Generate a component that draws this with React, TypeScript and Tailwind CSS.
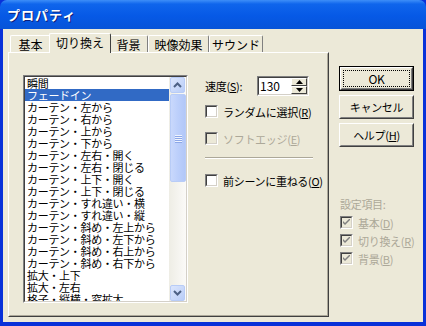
import type { ReactNode } from "react";

const items = [
  "瞬間",
  "フェードイン",
  "カーテン・左から",
  "カーテン・右から",
  "カーテン・上から",
  "カーテン・下から",
  "カーテン・左右・開く",
  "カーテン・左右・閉じる",
  "カーテン・上下・開く",
  "カーテン・上下・閉じる",
  "カーテン・すれ違い・横",
  "カーテン・すれ違い・縦",
  "カーテン・斜め・左上から",
  "カーテン・斜め・左下から",
  "カーテン・斜め・右上から",
  "カーテン・斜め・右下から",
  "拡大・上下",
  "拡大・左右",
  "格子・縦横・窓拡大"
];

const tabs = ["基本", "切り換え", "背景", "映像効果", "サウンド"];

export default function App() {
  return (
    <div className="flex h-[326px] w-[426px] flex-col bg-[#0831d9] font-['Noto_Sans_CJK_JP','Noto_Sans',sans-serif] text-[11px] leading-[12px] tracking-[-0.3px] text-black">
      {/* title bar */}
      <div className="flex h-[29px] shrink-0 items-center rounded-t-[7px] bg-[linear-gradient(to_bottom,#3d8ef8_0%,#0f65ec_14%,#0659e6_55%,#0754d8_100%)] pl-[7px]">
        <span className="text-[13px] font-bold tracking-[1px] text-white [text-shadow:1px_1px_0_#0a1e7a]">
          プロパティ
        </span>
      </div>

      {/* client */}
      <div className="mx-[3px] mb-[4px] flex flex-1 bg-[#ece9d8]">
        <div className="ml-[5px] mt-[4px] flex w-[321px] flex-col">
          {/* tabs */}
          <div className="flex h-[19px] items-end pl-[2px] text-[12px] tracking-normal">
            {tabs.map((tab, i) => (
              <Tab key={tab} label={tab} selected={i === 1} width={[41, 58, 39, 61, 54][i]} />
            ))}
          </div>

          {/* panel */}
          <div className="flex h-[265px] border border-b-[#404040] border-l-white border-r-[#404040] border-t-white">
            <div className="flex flex-1 border border-b-[#aca899] border-l-[#ece9d8] border-r-[#aca899] border-t-[#ece9d8] pl-[13px] pt-[21px]">
              <ListBox />

              <div className="ml-[17px] flex w-[108px] flex-col pt-[1px]">
                <div className="flex items-center">
                  <span className="w-[52px]">
                    速度(<u>S</u>):
                  </span>
                  <Spin value="130" />
                </div>
                <div className="mt-[9px]">
                  <Check label={<>ランダムに選択(<u>R</u>)</>} />
                </div>
                <div className="mt-[14px]">
                  <Check label={<>ソフトエッジ(<u>E</u>)</>} disabled />
                </div>
                <div className="mt-[12px] h-[2px] border-b border-t border-b-white border-t-[#aca899]" />
                <div className="mt-[15px]">
                  <Check label={<>前シーンに重ねる(<u>O</u>)</>} />
                </div>
              </div>
            </div>
          </div>
        </div>

        {/* right column */}
        <div className="ml-[10px] mt-[37px] flex w-[75px] flex-col">
          <Button primary>OK</Button>
          <div className="mt-[4px]">
            <Button>キャンセル</Button>
          </div>
          <div className="mt-[4px]">
            <Button>
              ヘルプ(<u>H</u>)
            </Button>
          </div>
          <div className="ml-[1px] mt-[51px] text-[#aca899]">設定項目:</div>
          <div className="ml-[1px] mt-[6px] flex flex-col gap-[5px]">
            <Check label={<>基本(<u>D</u>)</>} disabled checked />
            <Check label={<>切り換え(<u>R</u>)</>} disabled checked />
            <Check label={<>背景(<u>B</u>)</>} disabled checked />
          </div>
        </div>
      </div>
    </div>
  );
}

function Tab({ label, selected, width }: { label: string; selected?: boolean; width: number }) {
  if (selected) {
    return (
      <div
        className="relative z-10 -mb-[1px] -ml-[2px] -mr-[2px] flex h-[20px] items-center justify-center rounded-t-[2px] border border-b-0 border-l-white border-r-[#404040] border-t-white bg-[#ece9d8] pb-[1px]"
        style={{ width: width + 4 }}
      >
        {label}
      </div>
    );
  }
  return (
    <div
      className="flex h-[17px] items-center justify-center rounded-t-[2px] border border-b-0 border-l-white border-r-[#808080] border-t-white bg-[#ece9d8] pt-[1px]"
      style={{ width }}
    >
      {label}
    </div>
  );
}

function ListBox() {
  return (
    <div className="h-[228px] w-[165px] border border-b-white border-l-[#808080] border-r-white border-t-[#808080]">
      <div className="flex h-full border border-b-[#d4d0c8] border-l-[#404040] border-r-[#d4d0c8] border-t-[#404040] bg-white">
        <div className="flex-1 overflow-hidden">
          {items.map((item, i) => (
            <div
              key={item}
              className={
                i === 1
                  ? "h-[12px] whitespace-nowrap bg-[#316ac5] pl-[2px] text-white"
                  : "h-[12px] whitespace-nowrap pl-[2px]"
              }
            >
              {item}
            </div>
          ))}
        </div>
        <ScrollBar />
      </div>
    </div>
  );
}

function ScrollBar() {
  return (
    <div className="flex w-[17px] flex-col bg-[linear-gradient(to_right,#eeede5,#fbfaf8)] pl-[1px]">
      <ScrollButton dir="up" />
      <div className="mt-[1px] flex h-[88px] items-center justify-center rounded-[2px] border border-[#b8ccf7] bg-[linear-gradient(to_right,#c9d8fc,#bccffb_50%,#b2c7f8)]">
        <div className="flex flex-col gap-[1px]">
          {[0, 1, 2, 3].map((k) => (
            <div key={k} className="h-[1px] w-[7px] bg-[#eef3fe] shadow-[0_1px_0_#8ca7e8]" />
          ))}
        </div>
      </div>
      <div className="flex-1" />
      <ScrollButton dir="down" />
    </div>
  );
}

function ScrollButton({ dir }: { dir: "up" | "down" }) {
  return (
    <div className="flex h-[16px] w-[15px] items-center justify-center rounded-[2px] border border-[#b8ccf7] bg-[linear-gradient(to_bottom_right,#dce6fd,#b9cdf8)]">
      <svg width="9" height="6" viewBox="0 0 9 6">
        <path
          d={dir === "up" ? "M1 5 L4.5 1.5 L8 5" : "M1 1 L4.5 4.5 L8 1"}
          fill="none"
          stroke="#4d6185"
          strokeWidth="2"
        />
      </svg>
    </div>
  );
}

function Spin({ value }: { value: string }) {
  return (
    <div className="h-[20px] w-[52px] border border-b-white border-l-[#808080] border-r-white border-t-[#808080]">
      <div className="flex h-full items-center border border-b-[#d4d0c8] border-l-[#404040] border-r-[#d4d0c8] border-t-[#404040] bg-white pl-[1px] text-[12px] tracking-normal">
        <span className="flex-1">{value}</span>
        <div className="flex h-full w-[16px] flex-col">
          <SpinPart up />
          <SpinPart />
        </div>
      </div>
    </div>
  );
}

function SpinPart({ up }: { up?: boolean }) {
  return (
    <div className="flex flex-1 items-center justify-center border border-b-[#404040] border-l-white border-r-[#404040] border-t-white bg-[#ece9d8]">
      <svg width="7" height="4" viewBox="0 0 7 4">
        <path d={up ? "M0 4 L3.5 0 L7 4 Z" : "M0 0 L3.5 4 L7 0 Z"} fill="#000" />
      </svg>
    </div>
  );
}

function Check({
  label,
  disabled,
  checked
}: {
  label: ReactNode;
  disabled?: boolean;
  checked?: boolean;
}) {
  return (
    <div className="flex items-center">
      <div className="h-[13px] w-[13px] shrink-0 border border-b-white border-l-[#808080] border-r-white border-t-[#808080]">
        <div
          className={
            disabled
              ? "flex h-full items-center justify-center border border-b-[#d4d0c8] border-l-[#404040] border-r-[#d4d0c8] border-t-[#404040] bg-[#ece9d8]"
              : "flex h-full items-center justify-center border border-b-[#d4d0c8] border-l-[#404040] border-r-[#d4d0c8] border-t-[#404040] bg-white"
          }
        >
          {checked ? (
            <svg width="7" height="7" viewBox="0 0 7 7">
              <path d="M0 2 L0 4 L2 6 L7 1 L7 -1 L2 4 Z" fill="#808080" />
            </svg>
          ) : null}
        </div>
      </div>
      <span className={disabled ? "ml-[5px] whitespace-nowrap text-[#aca899]" : "ml-[5px] whitespace-nowrap"}>
        {label}
      </span>
    </div>
  );
}

function Button({ children, primary }: { children: ReactNode; primary?: boolean }) {
  if (primary) {
    return (
      <div className="h-[25px] w-[75px] border border-black">
        <div className="h-full border border-b-[#404040] border-l-white border-r-[#404040] border-t-white">
          <div className="flex h-full items-center justify-center border border-b-[#808080] border-l-[#ece9d8] border-r-[#808080] border-t-[#ece9d8] p-[1px]">
            <div className="flex h-full w-full items-center justify-center border border-dotted border-black text-[12px] font-normal">
              {children}
            </div>
          </div>
        </div>
      </div>
    );
  }
  return (
    <div className="h-[24px] w-[75px] border border-b-[#404040] border-l-white border-r-[#404040] border-t-white">
      <div className="flex h-full items-center justify-center border border-b-[#808080] border-l-[#ece9d8] border-r-[#808080] border-t-[#ece9d8]">
        {children}
      </div>
    </div>
  );
}
